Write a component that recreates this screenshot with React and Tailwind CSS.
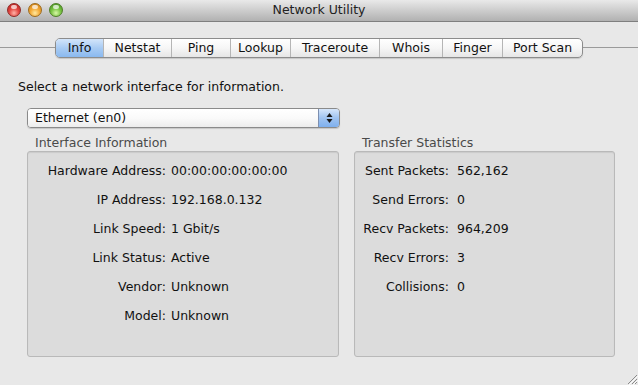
import React from "react";

const font = { fontFamily: '"DejaVu Sans", "Liberation Sans", sans-serif' };

const tabs = ["Info", "Netstat", "Ping", "Lookup", "Traceroute", "Whois", "Finger", "Port Scan"];
const tabWidths = ["w-[47px]", "w-[68px]", "w-[59px]", "w-[60px]", "w-[89px]", "w-[63px]", "w-[60px]", "w-[80px]"];

const iface = [
  ["Hardware Address:", "00:00:00:00:00:00"],
  ["IP Address:", "192.168.0.132"],
  ["Link Speed:", "1 Gbit/s"],
  ["Link Status:", "Active"],
  ["Vendor:", "Unknown"],
  ["Model:", "Unknown"],
];

const stats = [
  ["Sent Packets:", "562,162"],
  ["Send Errors:", "0"],
  ["Recv Packets:", "964,209"],
  ["Recv Errors:", "3"],
  ["Collisions:", "0"],
];

function Light({ color }) {
  const styles = {
    red: "bg-[radial-gradient(circle_at_50%_75%,#ffb3a8_0%,#e2453f_45%,#b41e1e_100%)] border-[#8e2a26]",
    yellow: "bg-[radial-gradient(circle_at_50%_75%,#ffe9a0_0%,#f3a834_45%,#c77b12_100%)] border-[#9c6b1e]",
    green: "bg-[radial-gradient(circle_at_50%_75%,#d8f7a6_0%,#79c443_45%,#3f8c1c_100%)] border-[#4f7d28]",
  };
  return (
    <div className={`relative w-[14px] h-[14px] rounded-full border ${styles[color]}`}>
      <div className="absolute left-[3px] top-[1px] w-[6px] h-[4px] rounded-full bg-white/70" />
    </div>
  );
}

function InfoBox({ title, rows, labelW, gap, width }) {
  return (
    <div className={`flex flex-col ${width}`}>
      <div className="h-[17px] pl-[8px] text-[12.5px] leading-[17px] text-[#4a4a4a]">{title}</div>
      <div className="h-[206px] rounded-[3px] border border-[#b9b9b9] bg-[#dcdcdc] pt-[5px] shadow-[inset_0_1px_1px_rgba(0,0,0,0.08)]">
        {rows.map(([k, v]) => (
          <div key={k} className="flex h-[29px] items-center text-[12.5px] text-[#111]">
            <div className={`${labelW} text-right`}>{k}</div>
            <div className={gap}>{v}</div>
          </div>
        ))}
      </div>
    </div>
  );
}

export default function App() {
  return (
    <div className="w-[638px] h-[385px] overflow-hidden bg-[#e8e8e8] flex flex-col" style={font}>
      {/* Title bar */}
      <div className="relative h-[22px] shrink-0 bg-gradient-to-b from-[#e9e9e9] to-[#b1b1b1] border-b border-[#7f7f7f] flex items-center">
        <div className="absolute left-[7px] top-[3px] flex gap-[7px]">
          <Light color="red" />
          <Light color="yellow" />
          <Light color="green" />
        </div>
        <div className="w-full text-center text-[12.5px] text-[#222]">Network Utility</div>
      </div>

      {/* Tabs */}
      <div className="relative mt-[16px] h-[20px] flex items-center">
        <div className="absolute left-0 right-0 top-[9px] h-px bg-[#9a9a9a]" />
        <div className="relative ml-[55px] flex h-[20px] rounded-[5px] border border-[#8c8c8c] bg-gradient-to-b from-[#ffffff] via-[#f6f6f6] to-[#e6e6e6] shadow-[0_1px_1px_rgba(0,0,0,0.15)] overflow-hidden">
          {tabs.map((t, i) => (
            <div
              key={t}
              className={`${tabWidths[i]} flex items-center justify-center text-[12.5px] text-[#111] ${i > 0 ? "border-l border-[#b5b5b5]" : ""} ${i === 0 ? "bg-gradient-to-b from-[#d3e5fa] via-[#a8cbf3] to-[#8ab9ef]" : ""}`}
            >
              {t}
            </div>
          ))}
        </div>
      </div>

      {/* Content */}
      <div className="mt-[20px] pl-[18px] h-[17px] text-[12.5px] leading-[17px] text-[#111]">
        Select a network interface for information.
      </div>

      <div className="ml-[27px] mt-[13px] flex h-[20px] w-[313px] rounded-[4px] border border-[#8a8a8a] overflow-hidden shadow-[0_1px_1px_rgba(0,0,0,0.15)]">
        <div className="flex-1 flex items-center pl-[7px] text-[12.5px] text-[#111] bg-gradient-to-b from-[#ffffff] via-[#fafafa] to-[#ececec]">
          Ethernet (en0)
        </div>
        <div className="w-[21px] border-l border-[#7d8fb0] bg-gradient-to-b from-[#d6e6fa] via-[#9fc3f0] to-[#7fb0ee] flex items-center justify-center">
          <svg width="7" height="12" viewBox="0 0 7 12">
            <path d="M3.5 1 L6.5 5 L0.5 5 Z" fill="#1a1a1a" />
            <path d="M3.5 11 L6.5 7 L0.5 7 Z" fill="#1a1a1a" />
          </svg>
        </div>
      </div>

      <div className="mt-[6px] ml-[27px] flex gap-[15px]">
        <InfoBox title="Interface Information" rows={iface} labelW="w-[138px]" gap="pl-[5px]" width="w-[312px]" />
        <InfoBox title="Transfer Statistics" rows={stats} labelW="w-[94px]" gap="pl-[8px]" width="w-[261px]" />
      </div>

      <div className="relative flex-1">
        <svg className="absolute right-0 bottom-0" width="13" height="13" viewBox="0 0 13 13">
          <path d="M12 3 L3 12 M12 7 L7 12 M12 10 L10 12" stroke="#8a8a8a" strokeWidth="1" />
          <path d="M13 4 L4 13 M13 8 L8 13" stroke="#ffffff" strokeWidth="1" opacity="0.8" />
        </svg>
      </div>
    </div>
  );
}
